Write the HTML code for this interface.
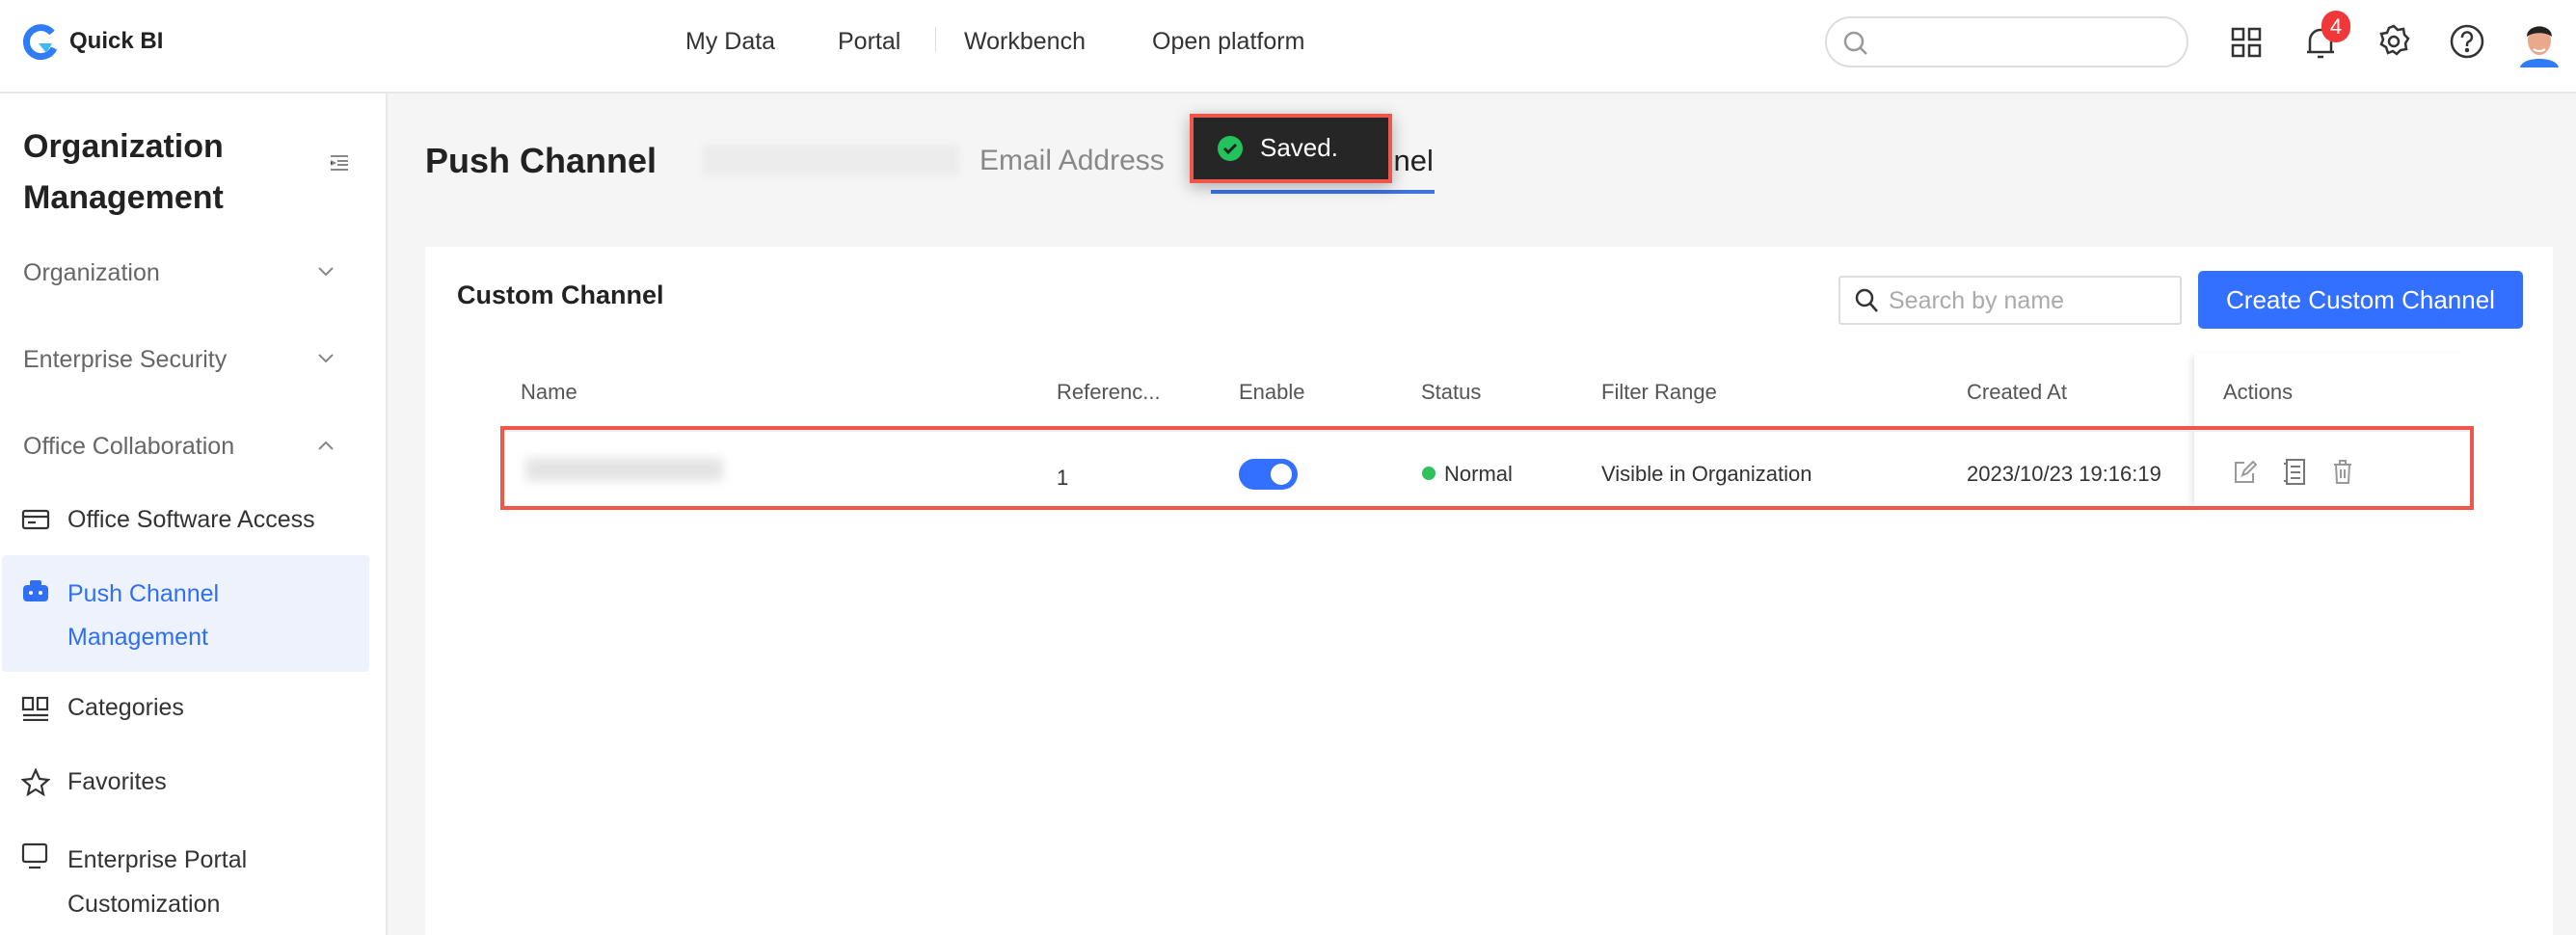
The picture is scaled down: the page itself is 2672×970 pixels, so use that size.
<!DOCTYPE html><html><head><meta charset="utf-8"><style>
*{margin:0;padding:0;box-sizing:border-box}
body{width:2672px;height:970px;overflow:hidden;background:#f5f5f5;font-family:"Liberation Sans",sans-serif;position:relative;color:#333}
.a{position:absolute;white-space:nowrap}
.hdr{left:0;top:0;width:2672px;height:97px;background:#fff;border-bottom:2px solid #e8e8e8}
.side{left:0;top:97px;width:402px;height:873px;background:#fff;border-right:2px solid #e8e8e8}
.nav{font-size:25px;color:#333;top:29px}
.mi{font-size:25px;color:#666;left:24px}
.si{font-size:25px;color:#333;left:70px}
.th{font-size:22px;color:#555;top:394px}
.td{font-size:22px;color:#333;top:479px}
</style></head><body>
<div class="a hdr"></div>
<svg class="a" style="left:22px;top:24px" width="40" height="40" viewBox="0 0 40 40"><path d="M32 10A15 15 0 1 0 34 26" stroke="#2f7cf6" stroke-width="7" fill="none"/><path d="M18 21l14 0-6 10z" fill="#3fb8f5"/></svg>
<div class="a" style="left:72px;top:29px;font-size:24px;font-weight:bold;color:#222">Quick BI</div>
<div class="a nav" style="left:711px">My Data</div>
<div class="a nav" style="left:869px">Portal</div>
<div class="a" style="left:970px;top:28px;width:1px;height:26px;background:#ddd"></div>
<div class="a nav" style="left:1000px">Workbench</div>
<div class="a nav" style="left:1195px">Open platform</div>
<div class="a" style="left:1893px;top:17px;width:377px;height:53px;border:2px solid #ddd;border-radius:27px"></div>
<svg class="a" style="left:1910px;top:30px" width="30" height="30" viewBox="0 0 30 30"><circle cx="13" cy="13" r="9" stroke="#999" stroke-width="2.5" fill="none"/><path d="M20 20l6 6" stroke="#999" stroke-width="2.5"/></svg>
<svg class="a" style="left:2313px;top:27px" width="34" height="34" viewBox="0 0 34 34" fill="none" stroke="#333" stroke-width="2.5"><rect x="3" y="3" width="11" height="11"/><rect x="20" y="3" width="11" height="11"/><rect x="3" y="20" width="11" height="11"/><rect x="20" y="20" width="11" height="11"/></svg>
<svg class="a" style="left:2390px;top:24px" width="34" height="40" viewBox="0 0 34 40" fill="none" stroke="#333" stroke-width="2.5"><path d="M6 30V18a11 11 0 0 1 22 0v12zM3 30h28M14 35h6"/></svg>
<div class="a" style="left:2408px;top:11px;width:30px;height:33px;border-radius:16px;background:#f0383a;color:#fff;font-size:22px;text-align:center;line-height:33px">4</div>
<svg class="a" style="left:2464px;top:24px" width="38" height="38" viewBox="0 0 38 38" fill="none" stroke="#333" stroke-width="2.5"><path d="M19 3l4 4 6-1 1 6 4 4-3 5 1 6-6 1-4 4-4-3-5 2-2-6-5-3 2-5-2-6 6-1 2-5z"/><circle cx="19" cy="19" r="5"/></svg>
<svg class="a" style="left:2540px;top:24px" width="38" height="38" viewBox="0 0 38 38" fill="none" stroke="#333" stroke-width="2.5"><circle cx="19" cy="19" r="16"/><path d="M14 15a5 5 0 1 1 7 4c-2 1-2 2-2 5"/><circle cx="19" cy="28" r="1" fill="#333"/></svg>
<svg class="a" style="left:2612px;top:18px" width="44" height="52" viewBox="0 0 44 52"><path d="M2 52c2-12 38-12 40 0z" fill="#2f7cf6"/><ellipse cx="22" cy="24" rx="12" ry="15" fill="#e9a98a"/><path d="M9 20c0-14 26-14 26 0-6-5-20-5-26 0z" fill="#222"/><path d="M16 33q6 4 12 0" stroke="#fff" stroke-width="2" fill="none"/></svg>
<div class="a side"></div>
<div class="a" style="left:24px;top:126px;font-size:34px;font-weight:bold;color:#222;line-height:53px;white-space:normal;width:300px">Organization Management</div>
<svg class="a" style="left:341px;top:160px" width="22" height="18" viewBox="0 0 22 18" stroke="#888" stroke-width="2"><path d="M2 2h18M9 7h11M9 11h11M2 16h18M2 7l4 2-4 2"/></svg>
<div class="a mi" style="top:269px">Organization</div>
<div class="a mi" style="top:359px">Enterprise Security</div>
<div class="a mi" style="top:449px">Office Collaboration</div>
<svg class="a" style="left:329px;top:276px" width="18" height="12"><path d="M2 2l7 7 7-7" stroke="#888" stroke-width="2" fill="none"/></svg>
<svg class="a" style="left:329px;top:366px" width="18" height="12"><path d="M2 2l7 7 7-7" stroke="#888" stroke-width="2" fill="none"/></svg>
<svg class="a" style="left:329px;top:456px" width="18" height="12"><path d="M2 10l7-7 7 7" stroke="#888" stroke-width="2" fill="none"/></svg>
<svg class="a" style="left:22px;top:527px" width="30" height="24" fill="none" stroke="#333" stroke-width="2.2"><rect x="2" y="3" width="26" height="18" rx="2"/><path d="M2 9h26M7 15h8"/></svg>
<div class="a si" style="top:525px">Office Software Access</div>
<div class="a" style="left:2px;top:576px;width:381px;height:121px;background:#edf2fd;border-radius:4px"></div>
<svg class="a" style="left:22px;top:600px" width="30" height="26" fill="#2f6ff2"><rect x="2" y="7" width="26" height="17" rx="4"/><rect x="9" y="2" width="12" height="6" rx="2"/><circle cx="10" cy="15" r="2" fill="#fff"/><circle cx="20" cy="15" r="2" fill="#fff"/></svg>
<div class="a" style="left:70px;top:594px;font-size:25px;color:#2f6ff2;line-height:45px">Push Channel<br>Management</div>
<svg class="a" style="left:22px;top:722px" width="30" height="26" fill="none" stroke="#333" stroke-width="2.2"><rect x="2" y="2" width="10" height="12"/><rect x="17" y="2" width="10" height="12"/><path d="M2 20h26M2 25h26"/></svg>
<div class="a si" style="top:720px">Categories</div>
<svg class="a" style="left:22px;top:797px" width="30" height="30" fill="none" stroke="#333" stroke-width="2.2"><path d="M15 2l4 9 9 1-7 6 2 9-8-5-8 5 2-9-7-6 9-1z"/></svg>
<div class="a si" style="top:797px">Favorites</div>
<svg class="a" style="left:22px;top:874px" width="30" height="28" fill="none" stroke="#333" stroke-width="2.2"><rect x="2" y="2" width="24" height="18" rx="2"/><path d="M8 26h12"/></svg>
<div class="a" style="left:70px;top:869px;font-size:25px;color:#333;line-height:46px">Enterprise Portal<br>Customization</div>
<div class="a" style="left:441px;top:146px;font-size:36px;font-weight:bold;color:#222">Push Channel</div>
<div class="a" style="left:729px;top:150px;width:266px;height:32px;background:#ececec;filter:blur(3px)"></div>
<div class="a" style="left:1016px;top:150px;font-size:30px;color:#888">Email Address</div>
<div class="a" style="left:1256px;top:149px;font-size:31px;color:#222">Custom Channel</div>
<div class="a" style="left:1256px;top:197px;width:232px;height:4px;background:#3a73f0"></div>
<div class="a" style="left:1234px;top:118px;width:210px;height:72px;background:#262626;border:4px solid #f0564a;box-shadow:0 4px 16px rgba(0,0,0,.3)"></div>
<svg class="a" style="left:1262px;top:140px" width="28" height="28"><circle cx="14" cy="14" r="13" fill="#22c35a"/><path d="M8 14l4 4 8-8" stroke="#222" stroke-width="3" fill="none"/></svg>
<div class="a" style="left:1307px;top:138px;font-size:26px;color:#fff">Saved.</div>
<div class="a" style="left:441px;top:256px;width:2207px;height:714px;background:#fff"></div>
<div class="a" style="left:474px;top:291px;font-size:27px;font-weight:bold;color:#222">Custom Channel</div>
<div class="a" style="left:1907px;top:286px;width:356px;height:51px;border:2px solid #ddd;border-radius:3px"></div>
<svg class="a" style="left:1922px;top:297px" width="28" height="30"><circle cx="12" cy="12" r="8" stroke="#333" stroke-width="2.5" fill="none"/><path d="M18 18l7 8" stroke="#333" stroke-width="2.5"/></svg>
<div class="a" style="left:1959px;top:298px;font-size:25px;color:#aaa">Search by name</div>
<div class="a" style="left:2280px;top:281px;width:337px;height:60px;background:#3370ff;border-radius:5px;color:#fff;font-size:26px;text-align:center;line-height:60px">Create Custom Channel</div>
<div class="a" style="left:2276px;top:366px;width:286px;height:162px;box-shadow:-6px 0 8px -4px rgba(0,0,0,.12)"></div>
<div class="a th" style="left:540px">Name</div>
<div class="a th" style="left:1096px">Referenc...</div>
<div class="a th" style="left:1285px">Enable</div>
<div class="a th" style="left:1474px">Status</div>
<div class="a th" style="left:1661px">Filter Range</div>
<div class="a th" style="left:2040px">Created At</div>
<div class="a th" style="left:2306px">Actions</div>
<div class="a" style="left:520px;top:446px;width:2042px;height:2px;background:#eee"></div>
<div class="a" style="left:545px;top:475px;width:205px;height:24px;background:#e4e4e4;filter:blur(5px)"></div>
<div class="a td" style="left:1096px;top:483px">1</div>
<div class="a" style="left:1285px;top:476px;width:61px;height:32px;border-radius:16px;background:#3370ff"></div>
<div class="a" style="left:1318px;top:481px;width:22px;height:22px;border-radius:11px;background:#fff"></div>
<div class="a" style="left:1475px;top:484px;width:14px;height:14px;border-radius:7px;background:#2fc25b"></div>
<div class="a td" style="left:1498px">Normal</div>
<div class="a td" style="left:1661px">Visible in Organization</div>
<div class="a td" style="left:2040px">2023/10/23 19:16:19</div>
<svg class="a" style="left:2316px;top:477px" width="26" height="26" fill="none" stroke="#999" stroke-width="2"><path d="M12 3H3v20h18v-9M10 16l2-5 9-9 3 3-9 9z"/></svg>
<svg class="a" style="left:2367px;top:475px" width="26" height="30" fill="none" stroke="#777" stroke-width="2"><rect x="5" y="2" width="18" height="25"/><path d="M9 9h10M9 15h10M9 21h10M2 6h4M2 24h4"/></svg>
<svg class="a" style="left:2419px;top:475px" width="22" height="28" fill="none" stroke="#999" stroke-width="2"><path d="M2 7h18M8 7V3h6v4M4 7l1 19h12l1-19M9 12v9M13 12v9"/></svg>
<div class="a" style="left:519px;top:442px;width:2047px;height:87px;border:4px solid #f0564a"></div>
</body></html>
